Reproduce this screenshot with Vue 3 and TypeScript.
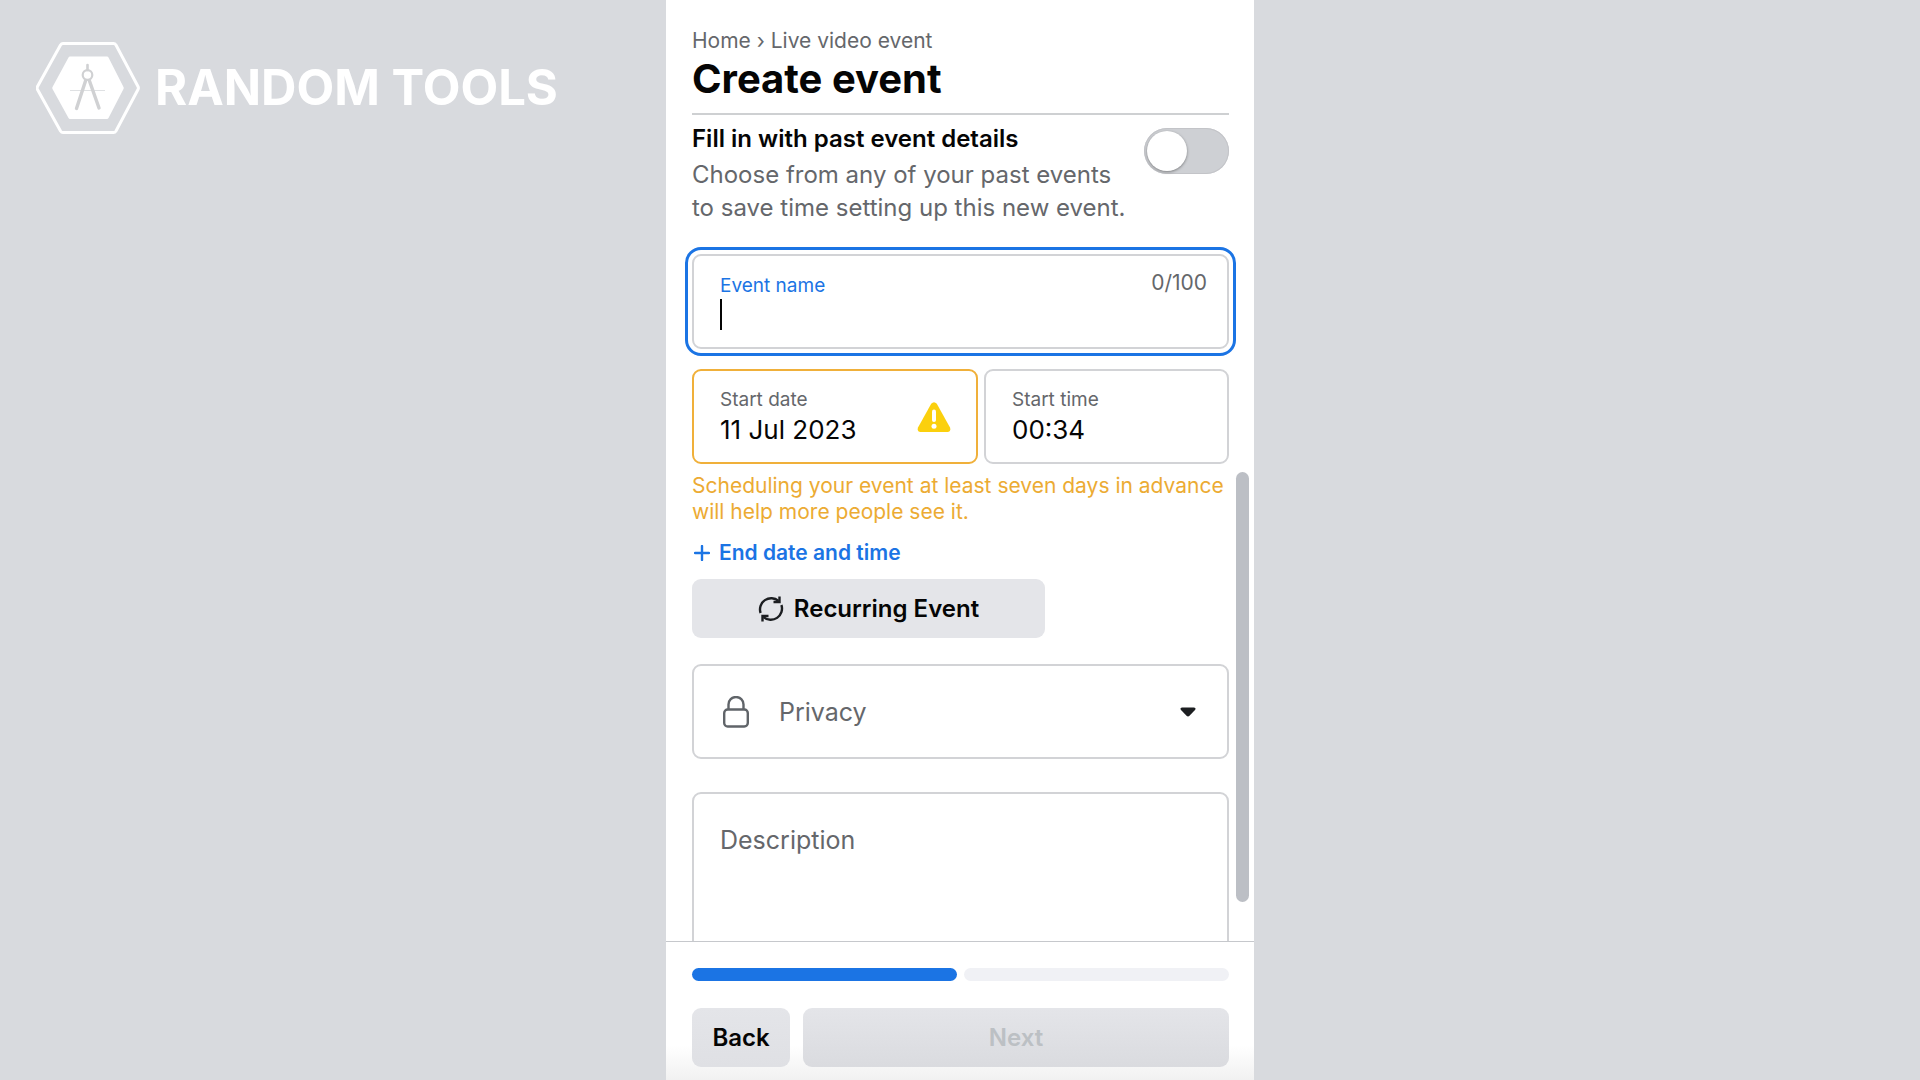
<script setup lang="ts">
import { ref } from 'vue'

const eventName = ref('')
const startDate = ref('11 Jul 2023')
const startTime = ref('00:34')
const privacy = ref('')
const description = ref('')
const usePastEvent = ref(false)
const nameLimit = 100
</script>

<template>
  <div class="page">
    <aside class="brand">
      <svg class="brand-mark" width="104" height="92" viewBox="0 0 104 92" aria-hidden="true">
        <path d="M27 1.5H77.500Q79 1.500 80 3L102 44.500Q102.800 46 102 47.500L80 89Q79 90.500 77.500 90.500H27Q25.500 90.500 24.500 89L1.500 47.500Q0.800 46 1.500 44.500L24.500 3Q25.500 1.500 27 1.500Z" fill="none" stroke="#fff" stroke-width="3" />
        <path d="M34 14.500H71Q72 14.500 72.500 15.500L87.500 45Q88 46 87.500 47L72.500 76Q72 77 71 77H34Q33 77 32.500 76L16.500 47Q16 46 16.500 45L32.500 15.500Q33 14.500 34 14.500Z" fill="#fff" />
        <path d="M34 48.500H69" stroke="#dfe1e3" stroke-width="1" />
        <g fill="none" stroke="#d0d1d3" stroke-linecap="round">
          <path d="M51.500 23V28" stroke-width="2.600" />
          <circle cx="51.500" cy="33" r="4.800" stroke-width="2.200" />
          <path d="M49.500 39L40.500 66.500M53.500 39L63 66" stroke-width="3.400" />
        </g>
      </svg>
      <span class="brand-name">RANDOM TOOLS</span>
    </aside>

    <main class="panel">
      <header class="head">
        <nav class="crumbs" aria-label="Breadcrumb"><a href="#home">Home</a> › <a href="#live">Live video event</a></nav>
        <h1>Create event</h1>
      </header>

      <div class="body">
        <form class="scroller" @submit.prevent>
          <div class="past">
            <div class="past-text">
              <label class="past-title" for="past">Fill in with past event details</label>
              <p>Choose from any of your past events to save time setting up this new event.</p>
            </div>
            <input id="past" v-model="usePastEvent" class="switch" type="checkbox" role="switch" />
          </div>

          <div class="field field-active">
            <div class="field-row">
              <label for="name">Event name</label>
              <span class="counter">{{ eventName.length }}/{{ nameLimit }}</span>
            </div>
            <div class="entry">
              <input id="name" v-model="eventName" type="text" :maxlength="nameLimit" />
              <span v-if="!eventName" class="caret"></span>
            </div>
          </div>

          <div class="when">
            <div class="field field-warn">
              <div class="stack">
                <label for="date">Start date</label>
                <input id="date" v-model="startDate" type="text" />
              </div>
              <svg width="34" height="30" viewBox="0 0 34 30" aria-hidden="true">
                <path d="M14.200 1.800Q17-1.500 19.800 1.800L33 25.500Q34.200 29.500 30.500 30H3.500Q-0.200 29.500 1 25.500Z" fill="#fbd00d" />
                <path d="M17 9.500V18" stroke="#fff" stroke-width="4" stroke-linecap="round" />
                <circle cx="17" cy="24.300" r="2.500" fill="#fff" />
              </svg>
            </div>
            <div class="field">
              <div class="stack">
                <label for="time">Start time</label>
                <input id="time" v-model="startTime" type="text" />
              </div>
            </div>
          </div>

          <p class="hint">Scheduling your event at least seven days in advance will help more people see it.</p>

          <button class="add-end" type="button">
            <svg width="16" height="16" viewBox="0 0 16 16" aria-hidden="true">
              <path d="M8 1V15M1 8H15" stroke="#1b74e4" stroke-width="2.400" stroke-linecap="round" />
            </svg>
            End date and time
          </button>

          <button class="btn recurring" type="button">
            <svg width="26" height="26" viewBox="0 0 26 26" fill="none" stroke="#1c1e21" stroke-width="2.400" aria-hidden="true">
              <path d="M2.600 17A11.200 11.200 0 0 1 20.500 4.900M23.400 9A11.200 11.200 0 0 1 5.500 21.100" />
              <path d="M15.500 6H21.500V0.500M10.500 20H4.500V25.500" />
            </svg>
            Recurring Event
          </button>

          <div class="field privacy">
            <svg width="26" height="32" viewBox="0 0 26 32" fill="none" stroke="#606469" stroke-width="2.400" aria-hidden="true">
              <rect x="1.200" y="13.500" width="23.600" height="17" rx="3.500" />
              <path d="M5.500 13.500V8.500A7.500 7.500 0 0 1 20.500 8.500V13.500" />
            </svg>
            <select v-model="privacy" aria-label="Privacy">
              <option value="">Privacy</option>
              <option value="public">Public</option>
              <option value="private">Private</option>
            </select>
            <svg class="arrow" width="16" height="10" viewBox="0 0 16 10" aria-hidden="true">
              <path d="M2 0.500H14Q16.500 1 15 3L9.500 8.800Q8 10 6.500 8.800L1 3Q-0.500 1 2 0.500Z" fill="#1c1e21" />
            </svg>
          </div>

          <div class="field description">
            <label for="desc">Description</label>
            <textarea id="desc" v-model="description"></textarea>
          </div>
        </form>
        <span class="thumb"></span>
      </div>

      <footer class="foot">
        <div class="steps"><span class="step done"></span><span class="step"></span></div>
        <div class="actions">
          <button class="btn back" type="button">Back</button>
          <button class="btn next" type="button" disabled>Next</button>
        </div>
      </footer>
    </main>
  </div>
</template>

<style>
body {
  background: #d8dade;
}
</style>

<style scoped>
.page {
  display: grid;
  grid-template-columns: 1fr minmax(0, 588px) 1fr;
  height: 100vh;
  background: #d8dade;
  color: #050505;
  font-family: Inter, "Liberation Sans", sans-serif;
}
.page *,
.page {
  box-sizing: border-box;
}
.brand {
  display: flex;
  align-items: center;
  align-self: start;
  gap: 15px;
  padding: 42px 0 0 36px;
}
.brand-mark {
  flex: none;
}
.brand-name {
  color: #fff;
  font-size: 49px;
  line-height: 60px;
  font-weight: 700;
  white-space: nowrap;
}
.panel {
  display: flex;
  flex-direction: column;
  min-height: 0;
  height: 100vh;
  background: #fff;
}
.head {
  flex: none;
  margin: 0 25px 0 26px;
  padding: 26px 0 11px;
  border-bottom: 2px solid #ced0d2;
}
.crumbs {
  color: #65676b;
  font-size: 21px;
  line-height: 30px;
}
.crumbs a {
  color: inherit;
  text-decoration: none;
}
h1 {
  margin: 0;
  font-size: 40px;
  line-height: 46px;
  font-weight: 700;
}
.body {
  position: relative;
  flex: 1;
  min-height: 0;
}
.scroller {
  height: 100%;
  padding: 0 25px 0 26px;
  overflow-y: auto;
  scrollbar-width: none;
}
.thumb {
  position: absolute;
  top: 43.25%;
  right: 5px;
  width: 13px;
  height: 52%;
  border-radius: 7px;
  background: #bcbfc5;
}
.past {
  display: flex;
  justify-content: space-between;
  align-items: flex-start;
  padding-top: 9px;
}
.past-text {
  flex: 0 1 440px;
}
.past-title {
  display: block;
  font-size: 24px;
  line-height: 30px;
  font-weight: 600;
}
.past p {
  margin: 4px 0 0;
  color: #65676b;
  font-size: 24px;
  line-height: 33px;
}
.switch {
  flex: none;
  appearance: none;
  width: 85px;
  height: 46px;
  margin: 4px 0 0;
  padding: 3px;
  border-radius: 23px;
  background: #ced0d4;
  box-shadow: inset 0 0 0 1px #c3c4c8;
}
.switch::before {
  content: "";
  display: block;
  width: 40px;
  height: 40px;
  border-radius: 50%;
  background: #fff;
  box-shadow: 0 1px 3px rgba(0, 0, 0, 0.4);
}
.switch:checked::before {
  margin-left: auto;
}
.field {
  min-height: 95px;
  padding: 0 20px 0 26px;
  border: 2px solid #d2d3d6;
  border-radius: 9px;
  background: #fff;
}
.field label {
  color: #65676b;
  font-size: 19px;
  line-height: 26px;
}
.field input {
  display: block;
  width: 100%;
  min-width: 0;
  margin: 0;
  padding: 0;
  border: 0;
  outline: 0;
  background: none;
  color: #050505;
  font: inherit;
  font-size: 26px;
  line-height: 34px;
  height: 34px;
}
.field-active {
  margin-top: 30px;
  padding-top: 17px;
  outline: 3px solid #1b74e4;
  outline-offset: 4px;
}
.field-row {
  display: flex;
  justify-content: space-between;
}
.field-active label {
  color: #1b74e4;
}
.counter {
  color: #65676b;
  font-size: 21px;
  line-height: 20px;
}
.entry {
  position: relative;
}
.caret {
  position: absolute;
  left: 0;
  top: 0;
  width: 2px;
  height: 31px;
  background: #050505;
}
.when {
  display: flex;
  gap: 6px;
  margin-top: 20px;
}
.when .field {
  display: flex;
  align-items: center;
  flex: 1;
  min-width: 0;
}
.when .field-warn {
  flex: 0 0 286px;
  padding-right: 25px;
  border-color: #f0b03a;
}
.when svg {
  flex: none;
}
.stack {
  display: flex;
  flex-direction: column;
  flex: 1;
  min-width: 0;
}
.hint {
  margin: 9px 0 0;
  color: #ecab33;
  font-size: 21px;
  line-height: 26px;
}
.add-end {
  display: flex;
  align-items: center;
  gap: 9px;
  margin: 13px 0 11px;
  padding: 0 0 0 2px;
  border: 0;
  background: none;
  color: #1b74e4;
  font: inherit;
  font-size: 21px;
  line-height: 30px;
  font-weight: 600;
}
.btn {
  display: flex;
  align-items: center;
  justify-content: center;
  height: 59px;
  padding: 0;
  border: 0;
  border-radius: 9px;
  background: #e4e5e9;
  color: #050505;
  font: inherit;
  font-size: 24px;
  font-weight: 600;
}
.recurring {
  gap: 10px;
  width: 353px;
}
.privacy {
  display: flex;
  align-items: center;
  margin-top: 26px;
  padding: 0 31px 0 29px;
}
.privacy select {
  flex: 1;
  min-width: 0;
  height: 60px;
  margin: 0 0 0 30px;
  padding: 0;
  appearance: none;
  border: 0;
  outline: 0;
  background: none;
  color: #65676b;
  font: inherit;
  font-size: 25px;
}
.description {
  display: flex;
  flex-direction: column;
  height: 240px;
  margin-top: 33px;
  padding-top: 29px;
}
.description label {
  font-size: 25px;
  line-height: 34px;
}
.description textarea {
  flex: 1;
  padding: 0;
  border: 0;
  outline: 0;
  resize: none;
  background: none;
  font: inherit;
  font-size: 25px;
}
.foot {
  flex: none;
  padding: 26px 25px 13px 26px;
  border-top: 1px solid #c6c8cc;
  background: linear-gradient(#fff 75%, #f1f1f1);
}
.steps {
  display: flex;
  gap: 7px;
}
.step {
  flex: 1;
  height: 13px;
  border-radius: 7px;
  background: #f0f1f5;
}
.done {
  background: #1b74e4;
}
.actions {
  display: flex;
  gap: 13px;
  margin-top: 27px;
}
.back {
  flex: none;
  width: 98px;
  background: linear-gradient(#e4e5e9, #dfe0e4);
}
.next {
  flex: 1;
  background: linear-gradient(#e4e5e9, #dadbdf);
  color: #bcc0c4;
}
</style>
